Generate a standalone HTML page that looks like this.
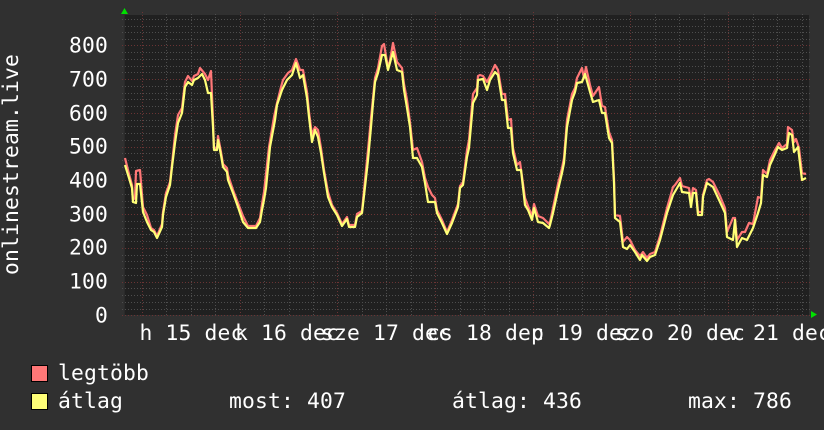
<!DOCTYPE html>
<html><head><meta charset="utf-8"><style>
html,body{margin:0;padding:0;background:#303030;width:824px;height:430px;overflow:hidden}
svg{display:block}
text{font-family:"DejaVu Sans Mono","Liberation Mono",monospace;font-size:21.33px;letter-spacing:.16px;fill:#fff}
</style></head><body>
<svg width="824" height="430" viewBox="0 0 824 430" xmlns="http://www.w3.org/2000/svg">
<rect width="824" height="430" fill="#303030"/>
<rect x="124" y="15" width="685" height="300" fill="#202020"/>
<rect x="124" y="15" width="1" height="300" fill="#2a2a2a"/>
<g stroke="#4e4e4e" stroke-width="1" stroke-dasharray="1 2" fill="none" shape-rendering="crispEdges">
<path d="M122 19.5H810M122 26.5H810M122 32.5H810M122 39.5H810M122 52.5H810M122 59.5H810M122 66.5H810M122 72.5H810M122 86.5H810M122 93.5H810M122 99.5H810M122 106.5H810M122 120.5H810M122 126.5H810M122 133.5H810M122 140.5H810M122 153.5H810M122 160.5H810M122 167.5H810M122 174.5H810M122 187.5H810M122 194.5H810M122 201.5H810M122 207.5H810M122 221.5H810M122 228.5H810M122 234.5H810M122 241.5H810M122 255.5H810M122 261.5H810M122 268.5H810M122 275.5H810M122 288.5H810M122 295.5H810M122 302.5H810M122 309.5H810"/>
<path d="M166.5 14V317M191.5 14V317M215.5 14V317M264.5 14V317M289.5 14V317M313.5 14V317M362.5 14V317M386.5 14V317M411.5 14V317M460.5 14V317M484.5 14V317M509.5 14V317M557.5 14V317M582.5 14V317M606.5 14V317M655.5 14V317M679.5 14V317M704.5 14V317M753.5 14V317M777.5 14V317M802.5 14V317"/>
</g>
<g stroke="#6a3434" stroke-width="1" stroke-dasharray="1 2" fill="none" shape-rendering="crispEdges">
<path d="M122 45.5H810M122 79.5H810M122 113.5H810M122 147.5H810M122 180.5H810M122 214.5H810M122 248.5H810M122 282.5H810M122 315.5H810"/>
<path d="M142.5 12V318M240.5 12V318M337.5 12V318M435.5 12V318M533.5 12V318M630.5 12V318M728.5 12V318"/>
</g>
<path d="M124.5 8L121 14H128Z" fill="#00e000"/>
<path d="M811 311V318L817 314.5Z" fill="#00e000"/>
<polyline fill="none" stroke="#f77" stroke-width="2.2" stroke-linejoin="round" points="125,158 129,174 132,185 133,200 135,198 136,171 140,170 143,207 147,215 151,228 154,230 157,236 162,224 163,212 166,193 170,182 172,164 175,135 178,115 182,108 185,82 188,76 192,81 194,76 198,74 200,68 205,74 208,80 211,71 213,120 214,148 217,148 218,136 221,152 223,164 227,168 228,175 233,190 238,203 243,216 248,226 256,226 260,218 262,204 264,192 265,183 269,147 274,117 277,103 281,87 283,80 288,73 292,70 296,59 300,70 303,70 307,92 309,112 312,135 315,127 318,130 321,148 324,170 328,192 332,205 337,213 342,224 347,217 349,225 355,225 357,214 362,211 365,180 368,150 371,118 373,98 375,78 378,68 382,46 384,44 387,62 389,66 393,43 397,62 402,68 404,84 407,100 410,122 413,150 417,148 422,162 425,178 428,187 432,195 435,198 437,210 442,220 447,232 452,220 458,204 460,186 463,182 467,150 469,140 473,94 477,88 478,76 480,75 483,76 487,82 490,76 495,65 498,70 502,94 505,94 508,120 511,119 513,148 517,165 520,162 525,198 528,206 532,216 534,204 538,216 543,218 549,224 550,222 553,208 558,184 562,168 564,158 567,120 572,94 575,88 577,78 582,68 584,78 586,67 590,85 593,96 599,87 602,106 605,107 609,132 612,140 614,178 615,215 620,216 623,242 627,237 630,240 635,250 640,256 643,252 647,258 650,254 655,252 660,236 667,208 673,187 675,185 680,178 682,186 689,188 691,200 693,188 696,190 698,212 702,212 703,195 707,180 709,179 713,182 720,196 725,208 727,232 733,218 735,218 737,240 742,232 745,232 749,223 753,224 758,197 761,198 763,170 767,174 770,160 775,150 779,143 782,148 787,144 788,127 792,130 794,142 796,139 799,148 802,173 806,174"/>
<polyline fill="none" stroke="#ff7" stroke-width="2.2" stroke-linejoin="round" points="125,165 129,178 132,188 133,202 136,203 137,184 140,184 143,212 147,222 151,230 154,232 157,238 162,227 163,215 166,197 170,185 172,167 175,143 178,123 182,113 185,87 188,82 192,85 194,80 198,78 202,74 205,80 208,93 211,93 213,127 214,150 217,150 218,140 221,155 223,167 227,172 228,180 233,193 238,207 243,222 248,228 256,228 260,222 262,210 264,200 266,188 270,147 275,120 277,105 282,90 287,80 292,75 296,63 300,78 303,75 307,98 309,117 312,142 315,130 318,137 321,153 324,173 328,197 332,207 337,215 342,226 347,219 349,227 355,227 357,217 362,213 365,187 368,160 371,127 373,103 375,82 378,73 382,55 385,55 388,70 393,52 397,70 402,72 404,90 407,108 410,127 413,158 417,158 422,167 425,183 428,202 432,202 435,202 437,213 442,223 447,234 452,223 458,207 460,188 463,185 467,157 469,148 473,103 477,95 478,80 483,79 487,90 490,80 495,72 498,75 502,100 505,100 508,128 511,128 513,153 517,170 521,170 525,205 528,210 532,220 534,208 538,222 543,223 549,228 550,225 553,213 558,190 562,173 564,163 567,127 572,100 575,92 577,83 582,82 585,74 590,92 593,102 599,100 602,113 605,113 609,138 612,143 614,183 615,218 620,222 623,247 627,249 630,245 635,252 640,260 642,255 647,261 650,257 655,255 660,240 667,213 673,195 680,183 682,192 689,193 691,207 693,193 696,193 698,215 702,215 703,197 707,183 713,187 720,202 725,213 727,237 733,240 735,220 737,247 742,238 747,240 753,228 758,213 761,203 763,175 767,177 770,165 775,154 778,147 782,150 787,148 789,133 792,135 794,152 798,147 802,180 806,178"/>
<g text-anchor="end">
<text x="108" y="52.5">800</text><text x="108" y="86.5">700</text><text x="108" y="120.5">600</text><text x="108" y="153.5">500</text><text x="108" y="187.5">400</text><text x="108" y="221.5">300</text><text x="108" y="254.5">200</text><text x="108" y="288.5">100</text><text x="108" y="322.5">0</text>
</g>
<text transform="translate(18,275) rotate(-90)">onlinestream.live</text>
<text x="139.5" y="340">h 15 dec</text><text x="235" y="340">k 16 dec</text><text x="321" y="340">sze 17 dec</text><text x="427" y="340">cs 18 dec</text><text x="531" y="340">p 19 dec</text><text x="615" y="340">szo 20 dec</text><text x="727" y="340">v 21 dec</text>
<rect x="31.5" y="365.5" width="16" height="16" fill="#f77" stroke="#000"/>
<rect x="31.5" y="393.5" width="16" height="16" fill="#ff7" stroke="#000"/>
<text x="58" y="380">legtöbb</text><text x="58" y="408">átlag</text>
<text x="229" y="408">most: 407</text><text x="452" y="408">átlag: 436</text><text x="688" y="408">max: 786</text>
</svg>
</body></html>
